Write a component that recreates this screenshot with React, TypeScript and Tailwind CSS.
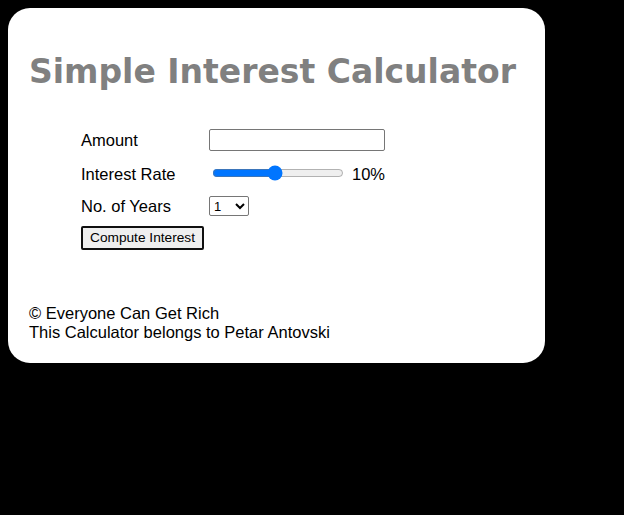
import { useState } from "react";

export default function App() {
  const [rate, setRate] = useState(10);

  return (
    <div className="min-h-[515px] bg-black p-2 font-['Liberation_Sans',Arial,sans-serif] text-[16.5px] text-black">
      <div className="flex h-[355px] w-[537px] flex-col rounded-[22px] bg-white px-[21px] pt-[40px]">
        <h1 className="font-['DejaVu_Sans',Verdana,sans-serif] text-[33px] font-bold leading-[48px] text-[#808080]">
          Simple Interest Calculator
        </h1>

        <div className="ml-[52px] mt-[33px] flex flex-col">
          <div className="flex h-[22px] items-center">
            <label className="w-[128px]">Amount</label>
            <input
              type="number"
              className="h-[22px] w-[176px] rounded-[2px] border border-[#767676] px-1 outline-none"
            />
          </div>

          <div className="mt-[12px] flex h-[22px] items-center">
            <label className="w-[128px]">Interest Rate</label>
            <input
              type="range"
              min={1}
              max={20}
              value={rate}
              onChange={(e) => setRate(Number(e.target.value))}
              className="ml-[3px] -mt-[3px] w-[132px] accent-[#0075ff]"
            />
            <span className="ml-[8px]">{rate}%</span>
          </div>

          <div className="mt-[10px] flex h-[22px] items-center">
            <label className="w-[128px]">No. of Years</label>
            <select className="h-[20px] w-[40px] rounded-[2px] border border-[#767676] bg-white text-[13px]">
              <option>1</option>
              <option>2</option>
              <option>3</option>
              <option>4</option>
              <option>5</option>
            </select>
          </div>

          <div className="mt-[7px]">
            <button className="h-[24px] rounded-[2px] border-2 border-[#101010] bg-[#efefef] px-[7px] text-[13.7px] leading-none">
              Compute Interest
            </button>
          </div>
        </div>

        <div className="mt-[54px] leading-[19px]">
          <p>© Everyone Can Get Rich</p>
          <p>This Calculator belongs to Petar Antovski</p>
        </div>
      </div>
    </div>
  );
}
